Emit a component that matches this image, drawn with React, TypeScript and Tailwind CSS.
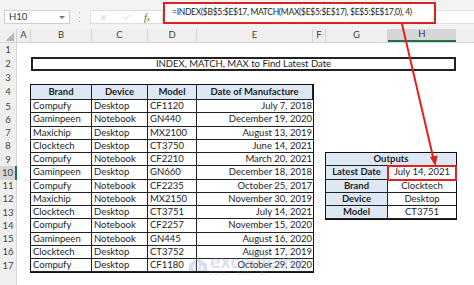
import { X, Check } from 'lucide-react';

const rows = [
  ['Compufy', 'Desktop', 'CF1120', 'July 7, 2018'],
  ['Gaminpeen', 'Notebook', 'GN440', 'December 19, 2020'],
  ['Maxichip', 'Desktop', 'MX2100', 'August 13, 2019'],
  ['Clocktech', 'Desktop', 'CT3750', 'June 14, 2021'],
  ['Compufy', 'Notebook', 'CF2210', 'March 20, 2021'],
  ['Gaminpeen', 'Desktop', 'GN660', 'December 18, 2018'],
  ['Compufy', 'Notebook', 'CF2235', 'October 25, 2017'],
  ['Maxichip', 'Notebook', 'MX2150', 'November 30, 2019'],
  ['Clocktech', 'Desktop', 'CT3751', 'July 14, 2021'],
  ['Compufy', 'Notebook', 'CF2257', 'November 15, 2020'],
  ['Gaminpeen', 'Notebook', 'GN445', 'August 16, 2020'],
  ['Clocktech', 'Desktop', 'CT3752', 'August 17, 2019'],
  ['Compufy', 'Desktop', 'CF1180', 'October 29, 2020'],
];

const letters = [
  { l: 'A', w: 'w-[14px]' },
  { l: 'B', w: 'w-[61px]' },
  { l: 'C', w: 'w-[56px]' },
  { l: 'D', w: 'w-[49px]' },
  { l: 'E', w: 'w-[116px]' },
  { l: 'F', w: 'w-[13px]' },
  { l: 'G', w: 'w-[62px]' },
];

const rowHeights = ['h-[14px]', 'h-[14px]', 'h-[14px]', 'h-[15px]'];

const outputs = [
  ['Latest Date', 'July 14, 2021'],
  ['Brand', 'Clocktech'],
  ['Device', 'Desktop'],
  ['Model', 'CT3751'],
];

function FormulaBar() {
  return (
    <div className="h-[29px] bg-[#f3f3f3] flex items-end pb-[5px]">
      <div className="ml-[4px] w-[66px] h-[14px] bg-white border border-[#cfcfcf] flex items-center justify-between pl-[4px] pr-[4px] text-[9.5px] text-[#333]">
        <span>H10</span>
        <span className="w-0 h-0 border-l-[3px] border-r-[3px] border-t-[3px] border-l-transparent border-r-transparent border-t-[#777]"></span>
      </div>
      <div className="ml-[9px] mb-[2px] h-[10px] flex flex-col justify-between">
        <span className="w-[1px] h-[1px] bg-[#aaa]"></span>
        <span className="w-[1px] h-[1px] bg-[#aaa]"></span>
        <span className="w-[1px] h-[1px] bg-[#aaa]"></span>
      </div>
      <div className="ml-[10px] w-[73px] h-[14px] bg-white border border-[#dcdcdc] flex items-center text-[#aaa]">
        <X className="ml-[8px] w-[9px] h-[9px]" strokeWidth={1.5} />
        <Check className="ml-[14px] w-[9px] h-[9px]" strokeWidth={1.5} />
        <span className="ml-[13px] text-[10px] italic text-[#555] font-['Liberation_Serif',serif]">
          f<span className="text-[7px]">x</span>
        </span>
      </div>
      <div className="w-[273px] h-[22px] border-2 border-[#e3211c] bg-white flex items-end pb-[3px] pl-[7px] text-[8.5px] tracking-[-0.3px] text-[#222] whitespace-nowrap">
        =INDEX($B$5:$E$17, MATCH(MAX($E$5:$E$17), $E$5:$E$17,0), 4)
      </div>
      <div className="flex-1 h-[14px] bg-white border-y border-[#e2e2e2]"></div>
    </div>
  );
}

function ColumnHeaders() {
  return (
    <div className="h-[14px] flex bg-[#efefef] text-[9.5px] text-[#444] border-b border-[#d4d4d4]">
      <div className="w-[17px] border-r border-[#d4d4d4] flex items-end justify-end pr-[2px] pb-[1px]">
        <span className="w-[8px] h-[8px] bg-[linear-gradient(to_bottom_right,transparent_50%,#b5b5b5_50%)]"></span>
      </div>
      {letters.map((c) => (
        <div key={c.l} className={`${c.w} border-r border-[#d4d4d4] flex items-center justify-center`}>
          {c.l}
        </div>
      ))}
      <div className="w-[68px] bg-[#d6d6d6] border-b-2 border-[#217346] flex items-center justify-center text-[#333]">
        H
      </div>
      <div className="flex-1"></div>
    </div>
  );
}

function RowHeaders() {
  return (
    <div className="w-[17px] shrink-0 flex flex-col bg-[#efefef] border-r border-[#d4d4d4] text-[9.5px] text-[#444]">
      {rowHeights.map((h, i) => (
        <div key={i} className={`${h} flex items-center justify-center`}>
          {i + 1}
        </div>
      ))}
      {rows.map((_, i) =>
        i + 5 === 10 ? (
          <div key={i} className="h-[13.25px] flex items-center justify-center bg-[#d6d6d6] border-r-2 border-[#217346] -mr-[1px]">
            10
          </div>
        ) : (
          <div key={i} className="h-[13.25px] flex items-center justify-center">
            {i + 5}
          </div>
        )
      )}
      <div className="flex-1"></div>
    </div>
  );
}

function MainTable() {
  return (
    <div className="col-start-2 col-span-4 row-start-4 row-span-14 outline-[1.5px] outline-[#111] grid grid-cols-[61px_56px_49px_116px] grid-rows-[15px_repeat(13,13.25px)] text-[9.5px] text-[#1e1e1e]">
      {['Brand', 'Device', 'Model', 'Date of Manufacture'].map((h) => (
        <div key={h} className="bg-[#dde8f4] border-r border-b border-[#222] font-bold flex items-center justify-center whitespace-nowrap">
          {h}
        </div>
      ))}
      {rows.map((r, i) => (
        <div key={i} className="contents">
          <div className="border-r border-b border-[#222] flex items-center pl-[2px] whitespace-nowrap">{r[0]}</div>
          <div className="border-r border-b border-[#222] flex items-center pl-[2px] whitespace-nowrap">{r[1]}</div>
          <div className="border-r border-b border-[#222] flex items-center pl-[2px] whitespace-nowrap">{r[2]}</div>
          <div className="border-b border-[#222] flex items-center justify-end pr-[1px] whitespace-nowrap">{r[3]}</div>
        </div>
      ))}
    </div>
  );
}

function OutputTable() {
  return (
    <div className="col-start-7 col-span-2 row-start-9 row-span-5 outline-[1.5px] outline-[#111] grid grid-cols-[62px_68px] grid-rows-[repeat(5,13.25px)] text-[9.5px] text-[#1e1e1e]">
      <div className="col-span-2 bg-[#dde8f4] border-b border-[#222] font-bold flex items-center justify-center">
        Outputs
      </div>
      {outputs.map(([k, v], i) => (
        <div key={k} className="contents">
          <div className="bg-[#dde8f4] border-r border-b border-[#222] font-bold flex items-center justify-center whitespace-nowrap">
            {k}
          </div>
          {i === 0 ? (
            <div className="border-b border-[#222] outline-2 outline-[#e3211c] -outline-offset-1 flex items-center justify-center whitespace-nowrap relative z-10">
              {v}
            </div>
          ) : (
            <div className="border-b border-[#222] flex items-center justify-center whitespace-nowrap">{v}</div>
          )}
        </div>
      ))}
    </div>
  );
}

export default function App() {
  return (
    <div className="relative w-[474px] h-[285px] overflow-hidden bg-white font-['Lato','Liberation_Sans',sans-serif]">
      <FormulaBar />
      <ColumnHeaders />
      <div className="flex h-[242px]">
        <RowHeaders />
        <div className="flex-1 grid grid-cols-[14px_61px_56px_49px_116px_13px_62px_68px_1fr] grid-rows-[14px_14px_14px_15px_repeat(13,13.25px)_1fr]">
          <div className="col-start-2 col-end-9 row-start-2 border-2 border-[#222] flex items-center justify-center text-[9.5px] text-[#1e1e1e]">
            INDEX, MATCH, MAX to Find Latest Date
          </div>
          <MainTable />
          <OutputTable />
        </div>
      </div>

      {/* watermark */}
      <div className="absolute left-[188px] top-[251px] flex items-center gap-[2px] opacity-30 text-[#7f96c8] pointer-events-none">
        <svg width="20" height="14" viewBox="0 0 20 14">
          <path d="M1 7 L10 1 L19 7 L19 14 L1 14 Z" fill="#7f96c8" />
          <rect x="5" y="8" width="2" height="5" fill="#fff" />
          <rect x="9" y="6" width="2" height="7" fill="#fff" />
          <rect x="13" y="9" width="2" height="4" fill="#fff" />
        </svg>
        <div className="flex flex-col leading-none">
          <span className="text-[19px] font-bold tracking-[0.5px]">exceldemy</span>
          <span className="text-[5px] tracking-[1px] mt-[1px]">EXCEL · DATA · BI</span>
        </div>
      </div>

      {/* arrow */}
      <svg className="absolute inset-0 pointer-events-none" width="474" height="285" viewBox="0 0 474 285">
        <line x1="402" y1="24" x2="433.5" y2="159" stroke="#e3211c" strokeWidth="2" />
        <polygon points="435.5,166.5 430,157 437.5,155.5" fill="#e3211c" />
      </svg>
    </div>
  );
}
